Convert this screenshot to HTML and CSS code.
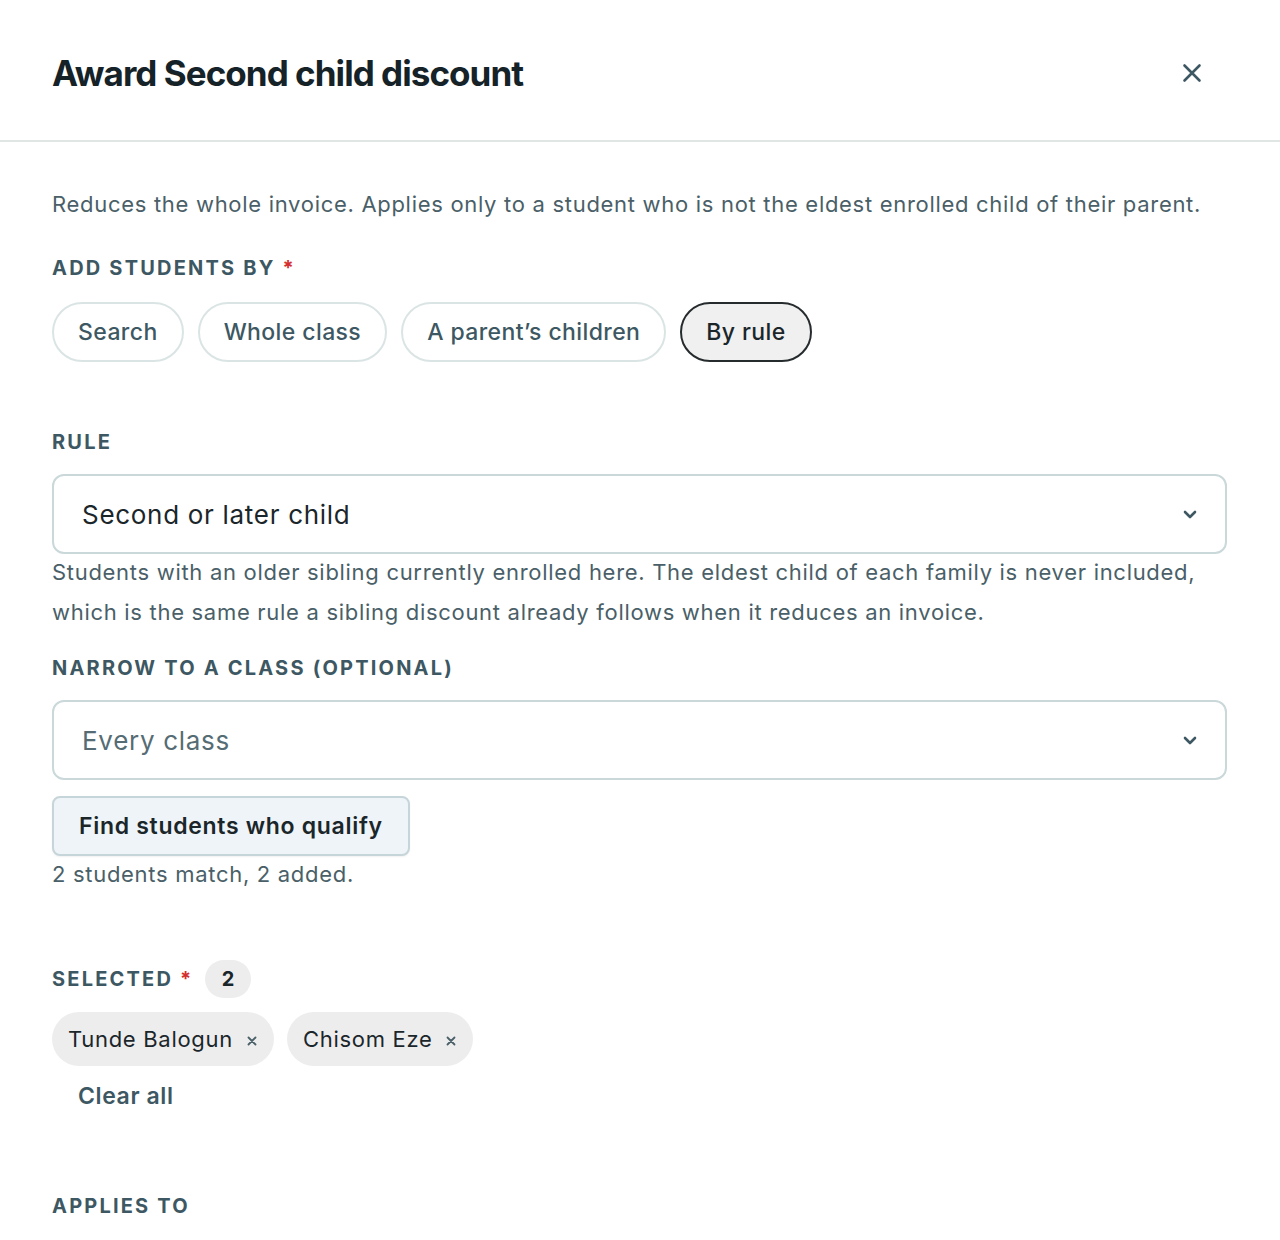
FILE: index.html
```html
<!DOCTYPE html>
<html lang="en">
<head>
<meta charset="utf-8">
<title>Award Second child discount</title>
<link rel="stylesheet" href="styles.css">
</head>
<body>
<div class="dialog">
  <header class="dialog-header">
    <h1 class="dialog-title">Award Second child discount</h1>
    <button class="icon-btn" aria-label="Close">
      <svg width="20" height="20" viewBox="0 0 20 20"><path d="M2.5 2.5L17.5 17.5M17.5 2.5L2.5 17.5" stroke="#3d5862" stroke-width="2.6" stroke-linecap="round" fill="none"/></svg>
    </button>
  </header>
  <div class="dialog-body">
    <p class="desc">Reduces the whole invoice. Applies only to a student who is not the eldest enrolled child of their parent.</p>

    <div class="label label-add">Add students by <span class="req">*</span></div>
    <div class="segments">
      <button class="seg">Search</button>
      <button class="seg">Whole class</button>
      <button class="seg">A parent’s children</button>
      <button class="seg seg-active">By rule</button>
    </div>

    <div class="label label-rule">Rule</div>
    <div class="select">
      <span class="select-value">Second or later child</span>
      <svg class="chev" width="14" height="9" viewBox="0 0 14 9"><path d="M2 2L7 7L12 2" stroke="#3d5862" stroke-width="2.6" stroke-linecap="round" stroke-linejoin="round" fill="none"/></svg>
    </div>
    <p class="help">Students with an older sibling currently enrolled here. The eldest child of each family is never included, which is the same rule a sibling discount already follows when it reduces an invoice.</p>

    <div class="label label-narrow">Narrow to a class (optional)</div>
    <div class="select">
      <span class="select-value placeholder">Every class</span>
      <svg class="chev" width="14" height="9" viewBox="0 0 14 9"><path d="M2 2L7 7L12 2" stroke="#3d5862" stroke-width="2.6" stroke-linecap="round" stroke-linejoin="round" fill="none"/></svg>
    </div>
    <button class="find-btn">Find students who qualify</button>
    <p class="match">2 students match, 2 added.</p>

    <div class="selected-row">
      <span class="label">Selected <span class="req">*</span></span>
      <span class="count">2</span>
    </div>
    <div class="tags">
      <span class="tag">Tunde Balogun <svg class="tag-x" width="10" height="10" viewBox="0 0 10 10"><path d="M1.5 1.5L8.5 8.5M8.5 1.5L1.5 8.5" stroke="#4a5f68" stroke-width="1.8" stroke-linecap="round" fill="none"/></svg></span>
      <span class="tag">Chisom Eze <svg class="tag-x" width="10" height="10" viewBox="0 0 10 10"><path d="M1.5 1.5L8.5 8.5M8.5 1.5L1.5 8.5" stroke="#4a5f68" stroke-width="1.8" stroke-linecap="round" fill="none"/></svg></span>
    </div>
    <button class="clear-btn">Clear all</button>

    <div class="label label-applies">Applies to</div>
  </div>
</div>
</body>
</html>
```

FILE: styles.css
```css
* { box-sizing: border-box; }
html, body { margin: 0; padding: 0; background: #fff; }
body {
  font-family: Inter, "Noto Sans", sans-serif;
  color: #1b262b;
  width: 1280px;
  height: 1240px;
  overflow: hidden;
}
button { font-family: inherit; cursor: pointer; }

.dialog-header {
  height: 142px;
  border-bottom: 2px solid #dfe6e4;
  display: flex;
  align-items: center;
  justify-content: space-between;
  padding: 6px 78px 0 52px;
}
.dialog-title {
  margin: 0;
  font-size: 35px;
  font-weight: 700;
  letter-spacing: -0.95px;
  color: #152228;
}
.icon-btn {
  background: none;
  border: none;
  padding: 0;
  width: 20px;
  height: 20px;
  display: flex;
}

.dialog-body {
  padding: 42px 53px 0 52px;
}
.desc {
  margin: 0;
  font-size: 22px;
  line-height: 40px;
  color: #4a5f68;
  letter-spacing: 0.7px;
}
.label {
  font-size: 20px;
  line-height: 24px;
  font-weight: 700;
  text-transform: uppercase;
  letter-spacing: 2.2px;
  color: #3d5862;
}
.req { color: #d42f2f; letter-spacing: 0; }
.label-add { margin-top: 32px; }
.segments {
  display: flex;
  gap: 14px;
  margin-top: 22px;
}
.seg {
  height: 60px;
  padding: 0 24px;
  border: 2px solid #dbe4e4;
  border-radius: 30px;
  background: #fff;
  font-size: 23px;
  letter-spacing: 0.4px;
  font-weight: 500;
  color: #3d5862;
}
.seg-active {
  background: #f0f0f0;
  border-color: #262c2e;
  color: #1b262b;
}
.label-rule { margin-top: 68px; }
.select {
  margin-top: 20px;
  height: 80px;
  border: 2px solid #cad8da;
  border-radius: 12px;
  display: flex;
  align-items: center;
  justify-content: space-between;
  padding: 0 28px 0 28px;
}
.select-value {
  font-size: 26px;
  letter-spacing: 0.7px;
  color: #1b262b;
}
.select-value.placeholder { color: #566c74; }
.chev { display: block; }
.help {
  margin: -2px 0 0;
  font-size: 22px;
  line-height: 40px;
  color: #4a5f68;
  letter-spacing: 0.7px;
}
.label-narrow { margin-top: 24px; }
.find-btn {
  display: block;
  margin-top: 16px;
  height: 60px;
  padding: 0 25px;
  background: #eef4f7;
  border: 2px solid #c6d5d9;
  border-radius: 8px;
  font-size: 23px;
  letter-spacing: 0.7px;
  font-weight: 600;
  color: #1b262b;
  box-shadow: 0 1px 2px rgba(0,0,0,0.06);
}
.match {
  margin: 0;
  font-size: 22px;
  letter-spacing: 0.7px;
  line-height: 36px;
  color: #4a5f68;
}
.selected-row {
  margin-top: 68px;
  display: flex;
  align-items: center;
  gap: 14px;
}
.count {
  min-width: 46px;
  height: 38px;
  padding: 0 14px;
  border-radius: 19px;
  background: #ededed;
  font-size: 20px;
  font-weight: 700;
  color: #1b262b;
  display: flex;
  align-items: center;
  justify-content: center;
}
.tags {
  margin-top: 14px;
  display: flex;
  gap: 13px;
}
.tag {
  height: 54px;
  padding: 0 17px 0 16px;
  border-radius: 27px;
  background: #ededed;
  display: flex;
  align-items: center;
  gap: 14px;
  font-size: 22px;
  letter-spacing: 0.7px;
  color: #1b262b;
}
.tag-x { margin-top: 4px; }
.clear-btn {
  display: block;
  margin-top: 10px;
  height: 40px;
  padding: 0 26px;
  background: none;
  border: none;
  font-size: 23px;
  letter-spacing: 0.6px;
  font-weight: 600;
  color: #3d5862;
}
.label-applies { margin-top: 78px; }
```
